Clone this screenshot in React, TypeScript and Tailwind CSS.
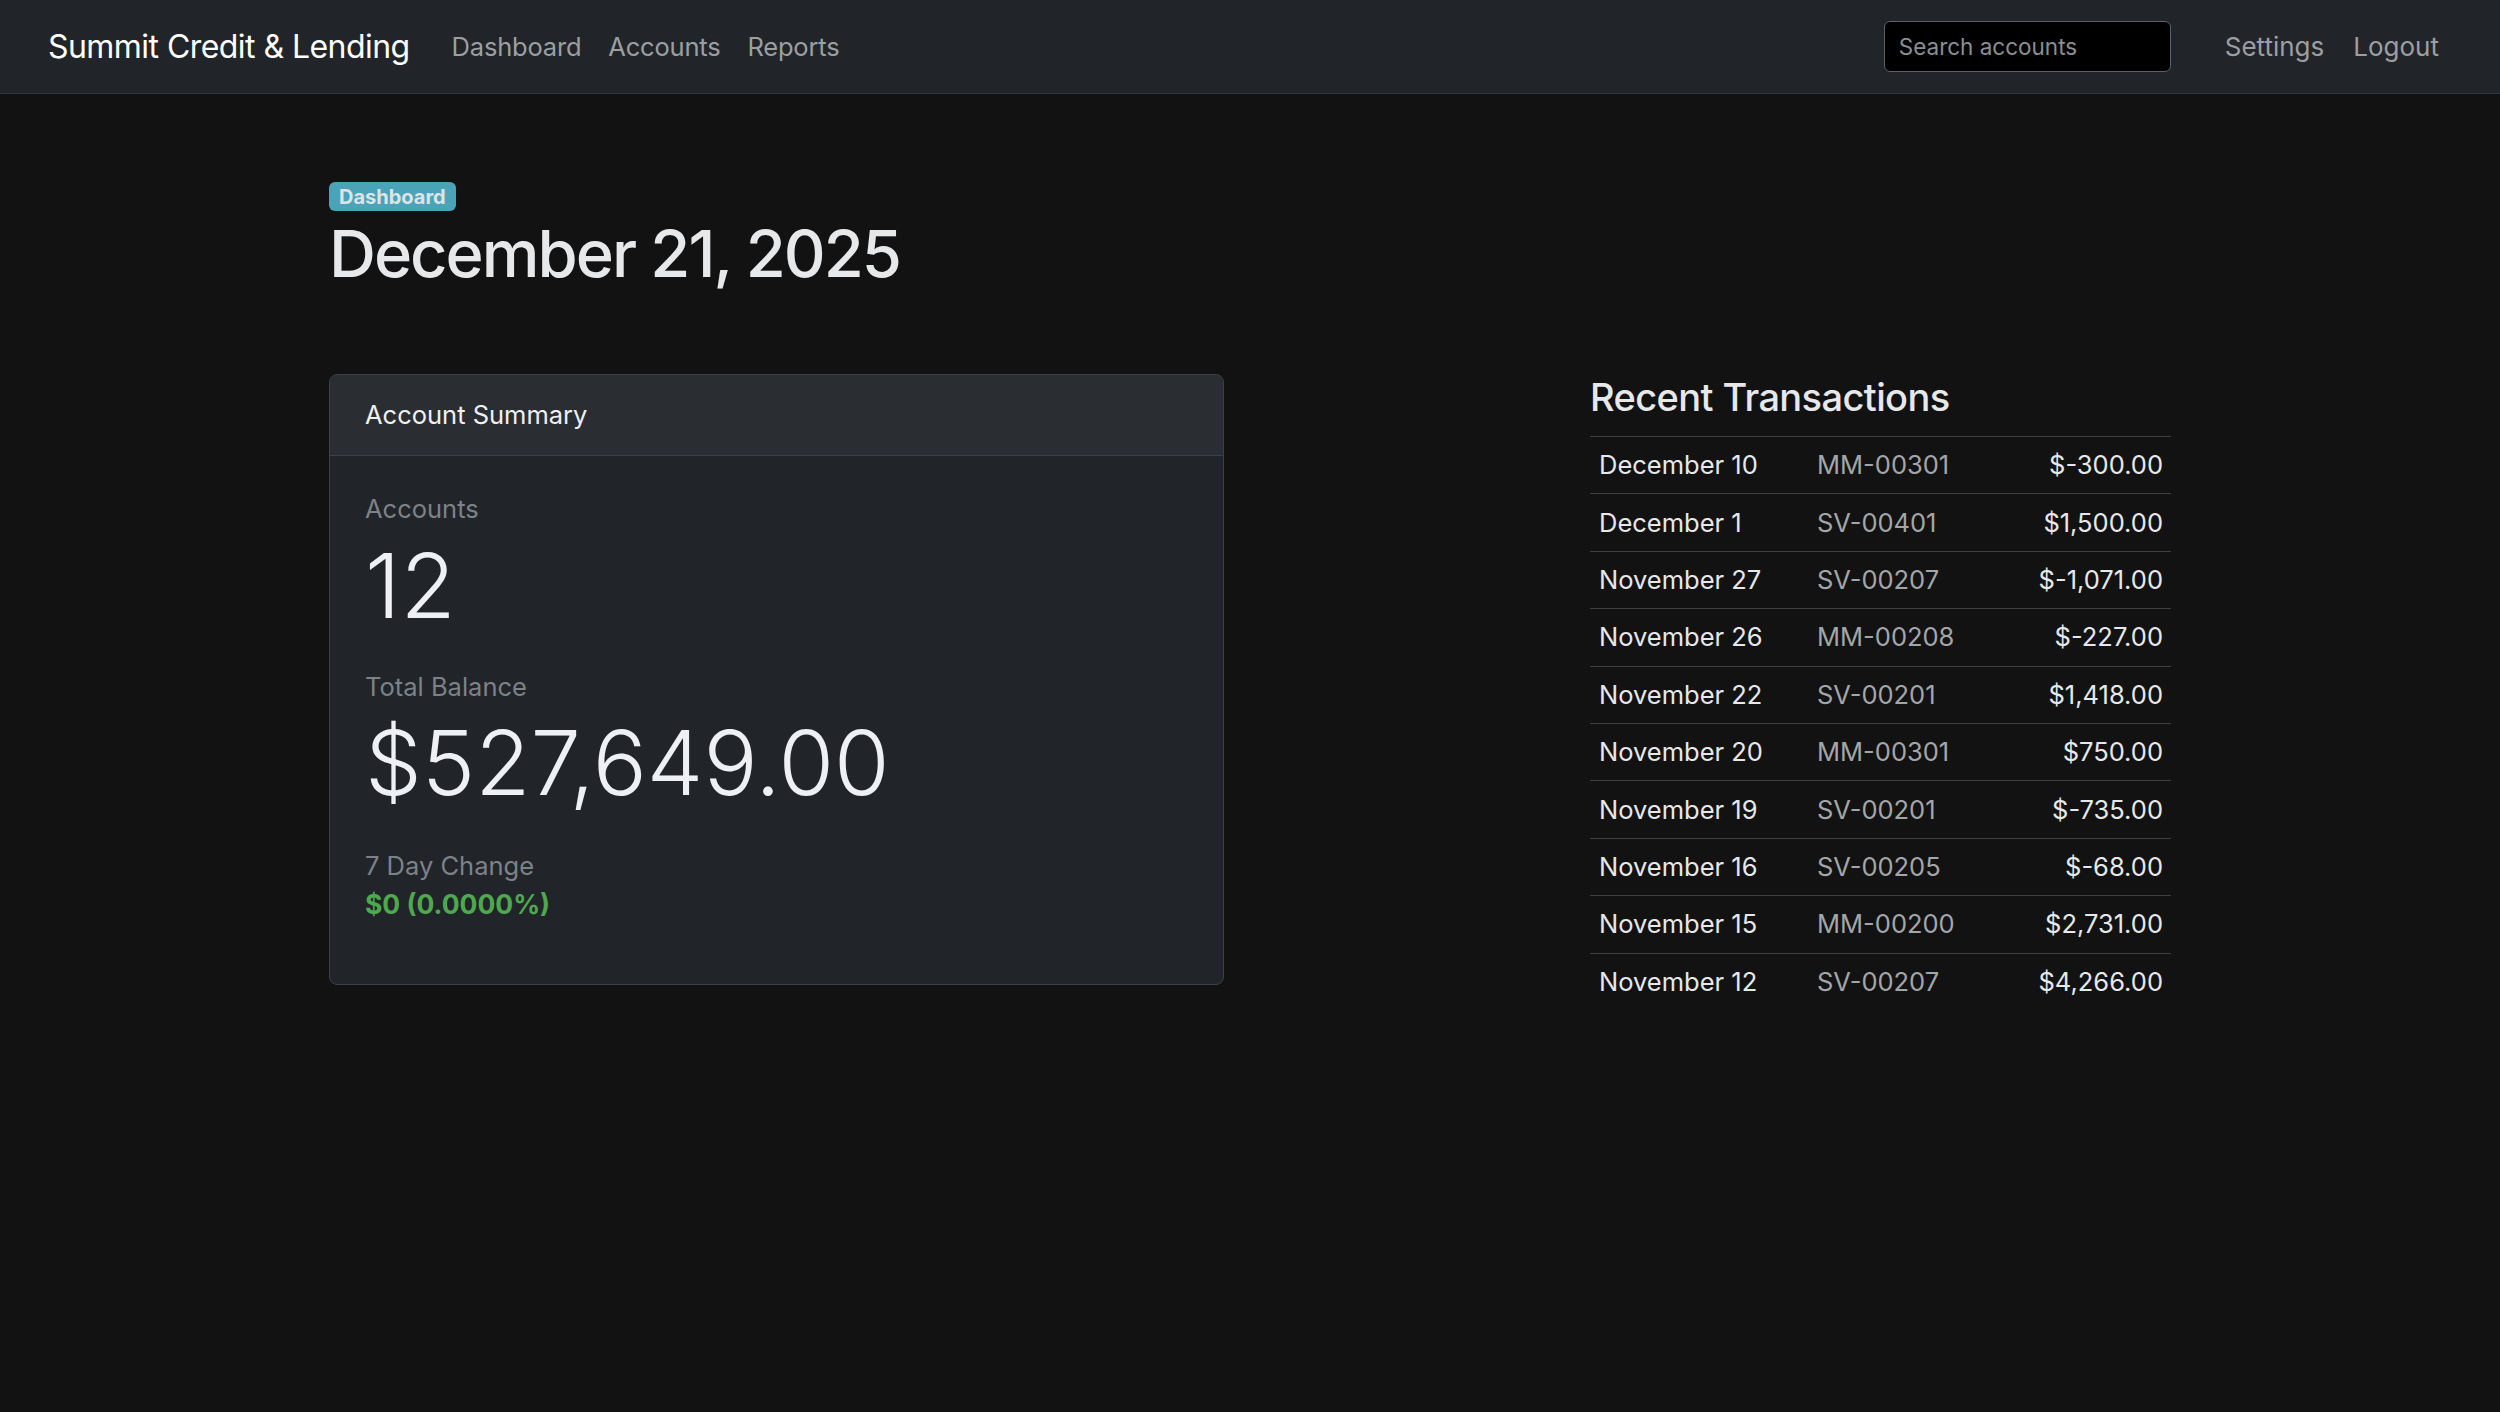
const transactions = [
  { date: "December 10", account: "MM-00301", amount: "$-300.00" },
  { date: "December 1", account: "SV-00401", amount: "$1,500.00" },
  { date: "November 27", account: "SV-00207", amount: "$-1,071.00" },
  { date: "November 26", account: "MM-00208", amount: "$-227.00" },
  { date: "November 22", account: "SV-00201", amount: "$1,418.00" },
  { date: "November 20", account: "MM-00301", amount: "$750.00" },
  { date: "November 19", account: "SV-00201", amount: "$-735.00" },
  { date: "November 16", account: "SV-00205", amount: "$-68.00" },
  { date: "November 15", account: "MM-00200", amount: "$2,731.00" },
  { date: "November 12", account: "SV-00207", amount: "$4,266.00" },
];

function Navbar() {
  return (
    <nav className="h-[94px] bg-[#212529] border-b border-[#33383d] flex items-center pl-[48px] pr-[61px]">
      <a className="text-[32px] leading-none tracking-[-0.55px] text-white whitespace-nowrap">Summit Credit &amp; Lending</a>
      <ul className="ml-[42px] flex gap-[27px] text-[25.5px] leading-none tracking-[-0.2px] text-[#9c9fa2]">
        <li>Dashboard</li>
        <li>Accounts</li>
        <li>Reports</li>
      </ul>
      <input
        type="text"
        placeholder="Search accounts"
        className="ml-auto w-[287px] h-[51px] bg-black border border-[#5c6167] rounded-[6px] px-[14px] text-[22.5px] text-[#dee2e6] placeholder:text-[#8b8f93] outline-none"
      />
      <ul className="ml-[54px] flex gap-[29px] text-[26px] leading-none text-[#9c9fa2]">
        <li>Settings</li>
        <li>Logout</li>
      </ul>
    </nav>
  );
}

function AccountSummary() {
  return (
    <div className="w-[895px] bg-[#212529] border border-[#3b4046] rounded-[8px] overflow-hidden">
      <div className="bg-[#2a2e33] border-b border-[#3b4046] px-[35px] py-[21px] text-[25.5px] leading-[38px] text-[#eef0f2]">
        Account Summary
      </div>
      <div className="px-[35px] pt-[34px] pb-[61px]">
        <p className="text-[25.5px] leading-[38px] text-[#7c8288]">Accounts</p>
        <p className="mt-[4px] text-[90px] leading-[108px] font-light text-[#eef0f3]">12</p>
        <p className="mt-[28px] text-[25.5px] leading-[38px] text-[#7c8288]">Total Balance</p>
        <p className="mt-[3px] text-[90px] leading-[108px] font-light text-[#eef0f3]">$527,649.00</p>
        <p className="mt-[30px] text-[25.5px] leading-[38px] text-[#7c8288]">7 Day Change</p>
        <p className="text-[26.5px] leading-[38px] font-bold text-[#4fa84f]">$0 (0.0000%)</p>
      </div>
    </div>
  );
}

function RecentTransactions() {
  return (
    <div className="w-[581px]">
      <h4 className="text-[38px] leading-[46px] tracking-[-0.6px] font-medium text-[#e6e8ea]">Recent Transactions</h4>
      <div className="mt-[16px]">
        {transactions.map((t) => (
          <div
            key={t.date}
            className="h-[57.4px] border-t border-[#3a3f44] flex items-center pl-[9px] pr-[8px] text-[25.5px] leading-[38px]"
          >
            <span className="w-[218px] text-[#e6e8ea]">{t.date}</span>
            <span className="flex-1 text-[#a3a6a9]">{t.account}</span>
            <span className="text-right text-[#e6e8ea]">{t.amount}</span>
          </div>
        ))}
      </div>
    </div>
  );
}

export default function App() {
  return (
    <div className="min-h-screen bg-[#121212] font-['Inter','Noto_Sans',sans-serif] text-[#dee2e6]">
      <Navbar />
      <main className="w-[1842px] mx-auto pt-[88px]">
        <span className="inline-block bg-[#4ba3b8] text-[#dde4e8] text-[20px] leading-none font-bold px-[10px] py-[4.5px] rounded-[6px]">
          Dashboard
        </span>
        <h1 className="mt-[3px] text-[65px] leading-[79px] tracking-[-2px] font-medium text-[#e6e8ea]">December 21, 2025</h1>
        <div className="mt-[81px] flex justify-between items-start">
          <AccountSummary />
          <RecentTransactions />
        </div>
      </main>
    </div>
  );
}
